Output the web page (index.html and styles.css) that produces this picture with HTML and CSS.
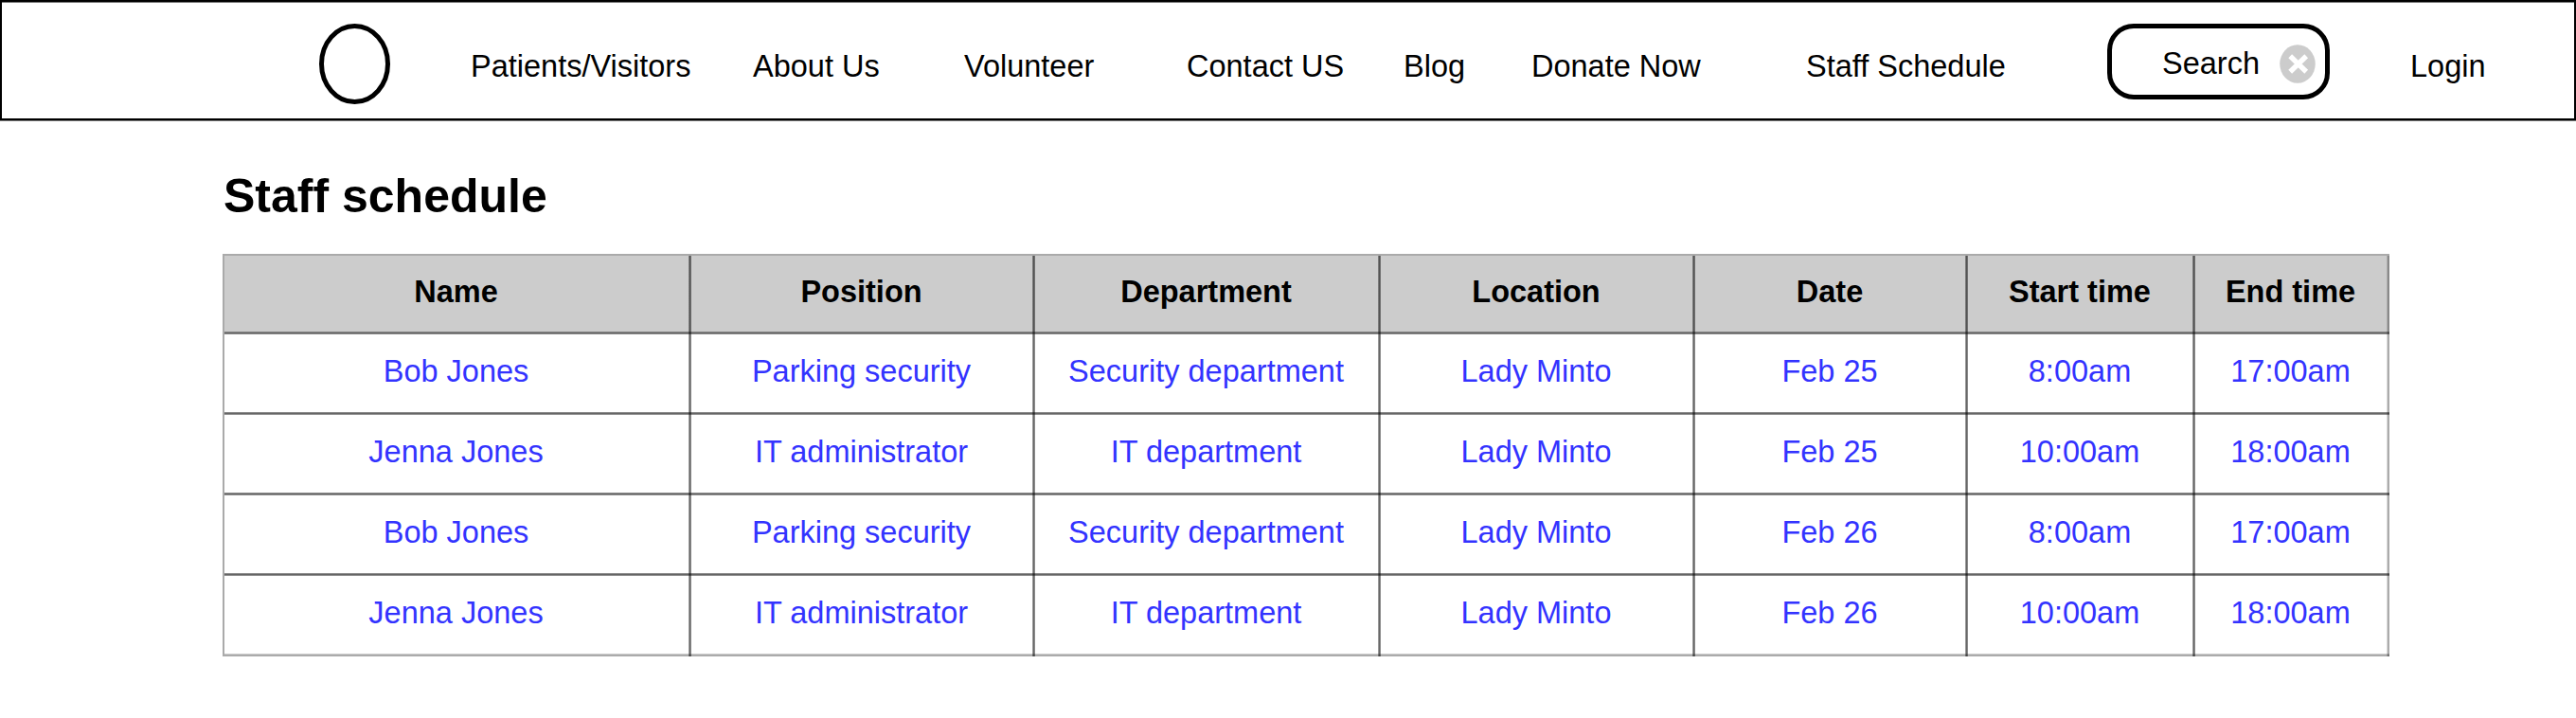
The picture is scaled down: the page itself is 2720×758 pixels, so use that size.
FILE: index.html
```html
<!DOCTYPE html>
<html lang="en">
<head>
<meta charset="utf-8">
<title>Staff schedule</title>
<link rel="stylesheet" href="styles.css">
</head>
<body>
<header class="bar">
  <svg class="logo" width="75" height="85" viewBox="0 0 75 85"><ellipse cx="37.5" cy="42.5" rx="35" ry="40"/></svg>
  <nav class="nav">
    <a class="link patients">Patients/Visitors</a>
    <a class="link about">About Us</a>
    <a class="link volunteer">Volunteer</a>
    <a class="link contact">Contact US</a>
    <a class="link blog">Blog</a>
    <a class="link donate">Donate Now</a>
    <a class="link schedule">Staff Schedule</a>
  </nav>
  <div class="search">
    <span class="search-text">Search</span>
    <svg class="clear" width="38" height="41" viewBox="0 0 38 41"><ellipse cx="19" cy="20.5" rx="18.75" ry="20.2" fill="#ccc"/><path d="M11.2 12.2 28.2 28.8M28.2 12.2 11.2 28.8" stroke="#fff" stroke-width="5.4"/></svg>
  </div>
  <a class="link login">Login</a>
</header>
<main class="content">
  <h1 class="title">Staff schedule</h1>
  <table class="table">
    <colgroup><col class="c1"><col class="c2"><col class="c3"><col class="c4"><col class="c5"><col class="c6"><col class="c7"></colgroup>
    <thead>
      <tr><th>Name</th><th>Position</th><th>Department</th><th>Location</th><th>Date</th><th>Start time</th><th>End time</th></tr>
    </thead>
    <tbody>
      <tr><td>Bob Jones</td><td>Parking security</td><td>Security department</td><td>Lady Minto</td><td>Feb 25</td><td>8:00am</td><td>17:00am</td></tr>
      <tr><td>Jenna Jones</td><td>IT administrator</td><td>IT department</td><td>Lady Minto</td><td>Feb 25</td><td>10:00am</td><td>18:00am</td></tr>
      <tr><td>Bob Jones</td><td>Parking security</td><td>Security department</td><td>Lady Minto</td><td>Feb 26</td><td>8:00am</td><td>17:00am</td></tr>
      <tr><td>Jenna Jones</td><td>IT administrator</td><td>IT department</td><td>Lady Minto</td><td>Feb 26</td><td>10:00am</td><td>18:00am</td></tr>
    </tbody>
  </table>
</main>
</body>
</html>
```
FILE: styles.css
```css
* { box-sizing: border-box; }
body {
  margin: 0;
  background: #fff;
  color: #000;
  font-family: "Liberation Sans", Arial, sans-serif;
  font-size: 32.5px;
  line-height: 38px;
}
.bar {
  display: flex;
  align-items: flex-start;
  height: 127px;
  border: 2px solid #000;
  box-shadow: 0 1px #777, inset 0 1px #777;
}
.logo { flex: none; margin: 23px 0 0 335px; fill: none; stroke: #000; stroke-width: 5; }
.nav { display: flex; width: 1813px; }
.link { flex: none; margin-top: 49px; white-space: nowrap; }
.patients { margin-left: 85px; width: 298px; }
.about { width: 223px; }
.volunteer { width: 235px; }
.contact { width: 229px; }
.blog { width: 135px; }
.donate { width: 290px; }
.search {
  flex: none;
  display: flex;
  width: 235px;
  height: 80px;
  margin-top: 23px;
  border: 5px solid #000;
  border-radius: 28px;
}
.search-text { width: 125px; margin: 18px 0 0 53px; }
.clear { flex: none; margin: 17px 0 0 -1px; }
.login { margin-left: 85px; }
.content { padding: 51px 0 0 235px; }
.title { margin: 0 0 0 1px; height: 90px; font-size: 50px; line-height: 58px; font-weight: 700; }
.table {
  width: 2288px;
  table-layout: fixed;
  border-collapse: separate;
  border-spacing: 0;
  border-left: 2px solid #aaa;
  border-top: 2px solid #aaa;
}
.c1 { width: 493px; }
.c2 { width: 363px; }
.c3 { width: 365px; }
.c4 { width: 332px; }
.c5 { width: 288px; }
.c6 { width: 240px; }
/* Translucent rules along the right and bottom edges darken where they cross. */
.table th, .table td {
  --side: linear-gradient(90deg, rgba(0,0,0,.4) 1px, rgba(0,0,0,.6) 1px 2px, rgba(0,0,0,.45) 2px);
  --base: linear-gradient(rgba(0,0,0,.45) 1px, rgba(0,0,0,.6) 1px 2px, rgba(0,0,0,.45) 2px);
  height: 85px;
  padding: 0 4px 7px 0;
  text-align: center;
  background-image: var(--side), var(--base);
  background-position: right top, left bottom;
  background-size: 3px 100%, 100% 3px;
  background-repeat: no-repeat;
}
.table th { height: 83px; background-color: #ccc; font-weight: 700; }
.table td { color: #33f; }
.table th:last-child, .table td:last-child {
  --side: linear-gradient(90deg, rgba(0,0,0,.15) 1px, rgba(0,0,0,.33) 1px);
}
.table tr:last-child td {
  --base: linear-gradient(rgba(0,0,0,.2) 1px, rgba(0,0,0,.33) 1px);
}
.table thead tr:last-child th {
  --base: linear-gradient(rgba(0,0,0,.35) 1px, rgba(0,0,0,.5) 1px 2px, rgba(0,0,0,.35) 2px);
}
```
